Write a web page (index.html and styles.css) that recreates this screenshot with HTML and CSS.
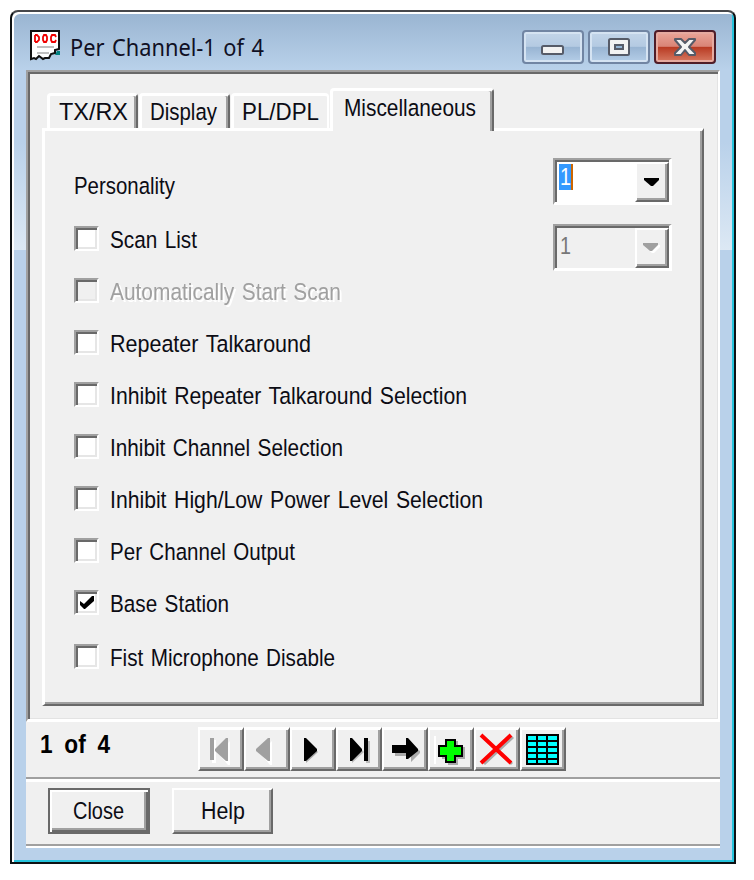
FILE: index.html
```html
<!DOCTYPE html>
<html lang="en">
<head>
<meta charset="utf-8">
<title>Per Channel</title>
<link rel="stylesheet" href="styles.css">
</head>
<body>
<main class="window">
  <header class="titlebar">
    <svg class="doc" width="32" height="32" viewBox="0 0 32 32">
      <path d="M27 21h3v4h-5z" fill="#008080"/>
      <path d="M1 1H29V19L25 20V23L21 24L19 28H15L13 29L9 26L6 29L4 28L1 29Z" fill="#fff" stroke="#111" stroke-width="2"/>
      <path d="M7 17H24M7 23H19" stroke="#c0c0c0" stroke-width="2"/>
      <path d="M5 5v7M5 5h2l2 2v3l-2 2H5M15 5h-1l-1 2v3l1 2h2l1-2V7l-1-2zM26 7l-1-2h-3l-1 2v3l1 2h3l1-2" fill="none" stroke="#f00000" stroke-width="1.8"/>
    </svg>
    <svg class="caption" width="200" height="34"><text x="1" y="24" textLength="194" lengthAdjust="spacingAndGlyphs">Per Channel-1 of 4</text></svg>
    <div class="controls">
      <button class="ctl" aria-label="Minimize"><svg width="56" height="30"><rect x="17" y="14" width="21" height="8" rx="1.5" fill="#f2f2f2" stroke="#565b68" stroke-width="2"/></svg></button>
      <button class="ctl" aria-label="Maximize"><svg width="56" height="30"><rect x="18" y="7" width="20" height="16" rx="1.5" fill="#f2f2f2" stroke="#565b68" stroke-width="2"/><rect x="24" y="13" width="8" height="4" fill="#94b4d3" stroke="#565b68" stroke-width="2"/></svg></button>
      <button class="ctl ctl-close" aria-label="Close window"><svg width="56" height="30"><path d="M18 7h6l4 4 4-4h6v1l-6 7 6 6v2h-6l-4-5-4 5h-6v-2l6-6-6-7z" fill="#f4f4f4" stroke="#565b68" stroke-width="2" stroke-linejoin="round"/></svg></button>
    </div>
  </header>
  <section class="client">
    <div class="view">
      <nav class="tabs">
        <div class="tab t1"><svg width="72" height="32"><text x="0" y="24" textLength="69" lengthAdjust="spacingAndGlyphs">TX/RX</text></svg></div>
        <div class="tab t2"><svg width="70" height="32"><text x="1" y="24" textLength="67" lengthAdjust="spacingAndGlyphs">Display</text></svg></div>
        <div class="tab t3"><svg width="82" height="32"><text x="1" y="24" textLength="77" lengthAdjust="spacingAndGlyphs">PL/DPL</text></svg></div>
        <div class="tab t4"><svg width="136" height="32"><text x="1" y="24" textLength="132" lengthAdjust="spacingAndGlyphs">Miscellaneous</text></svg></div>
      </nav>
      <div class="page">
        <div class="options">
          <div class="row first"><svg class="lbl" width="120" height="32"><text x="0" y="24" textLength="101" lengthAdjust="spacingAndGlyphs">Personality</text></svg></div>
          <div class="row"><i class="box"></i><svg class="lbl" width="120" height="32"><text y="24" textLength="87" lengthAdjust="spacingAndGlyphs">Scan List</text></svg></div>
          <div class="row off"><i class="box"></i><svg class="lbl" width="240" height="32"><text y="24" textLength="231" lengthAdjust="spacingAndGlyphs">Automatically Start Scan</text></svg></div>
          <div class="row"><i class="box"></i><svg class="lbl" width="220" height="32"><text y="24" textLength="201" lengthAdjust="spacingAndGlyphs">Repeater Talkaround</text></svg></div>
          <div class="row"><i class="box"></i><svg class="lbl" width="370" height="32"><text y="24" textLength="357" lengthAdjust="spacingAndGlyphs">Inhibit Repeater Talkaround Selection</text></svg></div>
          <div class="row"><i class="box"></i><svg class="lbl" width="250" height="32"><text y="24" textLength="233" lengthAdjust="spacingAndGlyphs">Inhibit Channel Selection</text></svg></div>
          <div class="row"><i class="box"></i><svg class="lbl" width="390" height="32"><text y="24" textLength="373" lengthAdjust="spacingAndGlyphs">Inhibit High/Low Power Level Selection</text></svg></div>
          <div class="row"><i class="box"></i><svg class="lbl" width="200" height="32"><text y="24" textLength="185" lengthAdjust="spacingAndGlyphs">Per Channel Output</text></svg></div>
          <div class="row"><i class="box"><svg width="18" height="18"><path d="M2 7l4 3 8-8h2v5l-9 8H6L2 11z" fill="#000"/></svg></i><svg class="lbl" width="130" height="32"><text y="24" textLength="119" lengthAdjust="spacingAndGlyphs">Base Station</text></svg></div>
          <div class="row last"><i class="box"></i><svg class="lbl" width="240" height="32"><text y="24" textLength="225" lengthAdjust="spacingAndGlyphs">Fist Microphone Disable</text></svg></div>
        </div>
        <div class="combos">
          <div class="combo">
            <div class="value"><span class="sel"><svg width="12" height="26"><text x="1" y="21" textLength="11" lengthAdjust="spacingAndGlyphs">1</text></svg></span></div>
            <div class="drop"><svg width="16" height="10"><path d="M0 1h15v2l-6 6H7L0 3z" fill="#000"/></svg></div>
          </div>
          <div class="combo disabled">
            <div class="value"><svg width="14" height="30"><text x="1" y="24" textLength="11" lengthAdjust="spacingAndGlyphs">1</text></svg></div>
            <div class="drop"><svg width="18" height="12"><path d="M2 3h15v2l-6 6H9L2 5z" fill="#fff"/><path d="M0 1h15v2l-6 6H7L0 3z" fill="#a0a0a0"/></svg></div>
          </div>
        </div>
      </div>
    </div>
    <div class="toolbar">
      <svg class="count" width="80" height="34"><text x="1" y="25" textLength="70" lengthAdjust="spacingAndGlyphs">1 of 4</text></svg>
      <div class="tools">
        <button class="tool" aria-label="First"><svg width="41" height="37"><path d="M12 9h4v23h-4zM30 10v24h-2L18 22z" fill="#fff"/><path d="M10 7h4v22h-4zM28 7v23h-2L15 20v-2L26 7z" fill="#a0a0a0"/></svg></button>
        <button class="tool" aria-label="Previous"><svg width="41" height="37"><path d="M26 10v24h-2L14 22z" fill="#fff"/><path d="M24 7v23h-2L10 20v-2L22 7z" fill="#a0a0a0"/></svg></button>
        <button class="tool" aria-label="Next"><svg width="41" height="37"><path d="M14 10l12 11-12 11z" fill="#aaa"/><path d="M12 7h2l11 11v2L14 30h-2z"/></svg></button>
        <button class="tool" aria-label="Last"><svg width="41" height="37"><path d="M14 10l12 11-12 11zM28 10h4v22h-4z" fill="#bbb"/><path d="M12 7h2l10 11v2L14 30h-2zM26 7h4v23h-4z"/></svg></button>
        <button class="tool" aria-label="Go to"><svg width="41" height="37"><path d="M11 17h15v-6l10 9v2l-9 9v-6H11z" fill="#aaa"/><path d="M8 14h14V7h2l10 11v2L24 28h-2v-6H8z"/></svg></button>
        <button class="tool" aria-label="Add"><svg width="41" height="37"><path d="M5 5v28" stroke="#fff" stroke-width="2"/><path d="M18 10h10v6h7v12h-7v6H18v-6h-6V16h6z" fill="#aaa"/><path d="M16 9h9v6h7v10h-7v6H16v-6H9V15h7z" fill="#0f0" stroke="#000" stroke-width="2"/></svg></button>
        <button class="tool" aria-label="Delete"><svg width="41" height="37"><path d="M6 5l30 28M37 6L8 33" stroke="#aaa" stroke-width="3"/><path d="M5 4l30 28M35 4L5 32" stroke="#f00" stroke-width="4"/></svg></button>
        <button class="tool" aria-label="Table"><svg width="41" height="37"><path d="M4 3h33v31H4z"/><path d="M6 5h8v4H6zm10 0h8v4h-8zm10 0h9v4h-9zM6 11h8v4H6zm10 0h8v4h-8zm10 0h9v4h-9zM6 17h8v4H6zm10 0h8v4h-8zm10 0h9v4h-9zM6 23h8v4H6zm10 0h8v4h-8zm10 0h9v4h-9zM6 29h8v3H6zm10 0h8v3h-8zm10 0h9v3h-9z" fill="#0ff"/></svg></button>
      </div>
    </div>
    <footer class="actions">
      <button class="push default"><svg width="56" height="32"><text x="2" y="24" textLength="51" lengthAdjust="spacingAndGlyphs">Close</text></svg></button>
      <button class="push"><svg width="48" height="32"><text x="2" y="24" textLength="44" lengthAdjust="spacingAndGlyphs">Help</text></svg></button>
    </footer>
  </section>
</main>
</body>
</html>
```
FILE: styles.css
```css
* { box-sizing: border-box; }
body { margin: 0; background: #fff; padding: 10px 0 0 10px; font-family: "Liberation Sans", Arial, sans-serif; }
svg { display: block; flex: none; overflow: visible; }
button { padding: 0; font: inherit; }
text { font-size: 24.5px; fill: #0c0c14; word-spacing: 2px; }

.window {
  width: 726px; height: 854px; padding: 2px 14px 0;
  border: 2px solid #0e1113; border-top-color: #46474a; border-radius: 8px 8px 0 0;
  box-shadow: inset 2px 2px #fff, inset -2px -2px #26c3dc;
  background:
    linear-gradient(#b9d1ea 40%, #dce8f4) 0 58px / 100% 180px no-repeat,
    linear-gradient(#99b4d1, #b9d1ea 58px);
}

.titlebar { height: 56px; display: flex; align-items: flex-start; padding: 16px 4px 0 4px; }
.caption { margin: 2px 0 0 7px; }
.caption text { font-family: "Noto Sans", "Open Sans", sans-serif; font-size: 23.5px; fill: #101024; }
.controls { margin-left: auto; display: flex; gap: 4px; }
.ctl {
  width: 62px; height: 34px; border: 2px solid #7185a3; border-radius: 4px;
  box-shadow: inset 0 0 0 2px #d5e3f2; display: flex; justify-content: center;
  background: linear-gradient(#c3d5e9, #b4cae2 48%, #98b4d2 50%, #b5cee8);
}
.ctl-close { border-color: #4f1d29; box-shadow: inset 0 0 0 2px #e6aaa0; background: linear-gradient(#eaa69a, #d98476 48%, #b83a22 50%, #d77a62); }

.client { width: 694px; height: 778px; background: #f0f0f0; border-bottom: 2px solid #fff; }
.view {
  height: 652px; padding: 12px 14px 0 14px;
  border: solid; border-width: 2px 2px 3px 2px; border-color: #a0a0a0 #fff #fff #a0a0a0;
  box-shadow: inset 2px 2px #696969, inset -1px -1px #e3e3e3;
  padding-top: 16px;
}

.tabs { height: 42px; display: flex; align-items: flex-end; padding-left: 5px; }
.tab {
  height: 35px; margin-right: 1px; border: solid; border-width: 3px 2px 0 3px;
  border-color: #fff #696969 #fff #fff; border-radius: 4px 4px 0 0; background: #f0f0f0;
  box-shadow: inset -2px 0 #a0a0a0; margin-bottom: 2px;
}
.t1 { width: 91px; padding-left: 9px; }
.t2 { width: 91px; padding-left: 7px; }
.t3 { width: 98px; padding-left: 7px; border-right-color: #fff; box-shadow: none; }
.t4 { width: 164px; height: 43px; padding: 1px 0 0 10px; margin: 0 0 -1px; position: relative; }

.page {
  width: 662px; height: 578px; margin-top: -2px; display: flex; justify-content: space-between;
  border: solid; border-width: 3px 2px 2px 3px; border-color: #fff #696969 #696969 #fff;
  box-shadow: inset -2px -2px #a0a0a0;
  padding: 27px 30px 0 29px;
}
.options { padding-top: 12px; }
.row { height: 52px; display: flex; align-items: flex-start; }
.row.first { height: 56px; }
.row:nth-last-child(2) { height: 54px; }
.row .box + .lbl { margin: -2px 0 0 11px; }
.box {
  width: 25px; height: 25px; background: #fff; border: solid; border-width: 2px;
  border-color: #a0a0a0 #fff #fff #a0a0a0; box-shadow: inset 2px 2px #696969, inset -2px -2px #e6e6e6;
  padding: 2px; flex: none;
}
.off .box { background: #f0f0f0; }
.off text { fill: #a0a0a0; }
.off .lbl { filter: drop-shadow(2px 2px 0 #fff); }

.combos { display: flex; flex-direction: column; gap: 19px; }
.combo {
  width: 119px; height: 47px; display: flex; background: #fff; padding: 2px 0 0 2px;
  border: solid; border-width: 2px 3px 3px 2px; border-color: #a0a0a0 #fff #fff #a0a0a0;
  box-shadow: inset 2px 2px #696969;
}
.value { flex: 1; padding: 2px; }
.sel { display: block; width: 14px; height: 26px; background: #3399ff; border-right: 2px solid #cc6600; }
.sel text { fill: #fff; }
.drop {
  width: 34px; height: 40px; background: #f0f0f0; display: flex; align-items: center; justify-content: center;
  border: solid; border-width: 2px; border-color: #fff #696969 #696969 #fff;
  box-shadow: inset -2px -2px #a0a0a0;
}
.disabled { background: #f0f0f0; }
.disabled text { fill: #777; }

.toolbar { height: 57px; display: flex; align-items: flex-start; border-bottom: 2px solid #a0a0a0; padding-left: 13px; }
.count { margin-top: 6px; }
.count text { font-size: 25px; font-weight: 700; fill: #000; word-spacing: 6px; }
.tools { display: flex; margin: 5px 0 0 79px; }
.tool {
  width: 46px; height: 44px; background: #f0f0f0; border: solid; border-width: 3px 2px 2px 2px;
  border-color: #fff #696969 #696969 #fff; box-shadow: inset -2px -2px #a0a0a0;
}
.actions {
  height: 67px; border-top: 3px solid #fff; border-bottom: 2px solid #a0a0a0;
  padding: 6px 0 0 22px; display: flex; gap: 22px;
}
.push {
  width: 101px; height: 46px; display: flex; align-items: center; justify-content: center;
  background: #f0f0f0; border: 2px solid; border-color: #fff #696969 #696969 #fff;
  box-shadow: inset -2px -2px #a0a0a0;
}
.push.default { width: 102px; border-color: #696969; box-shadow: inset 2px 2px #fff, inset -2px -2px #696969, inset -4px -4px #a0a0a0; }
```
